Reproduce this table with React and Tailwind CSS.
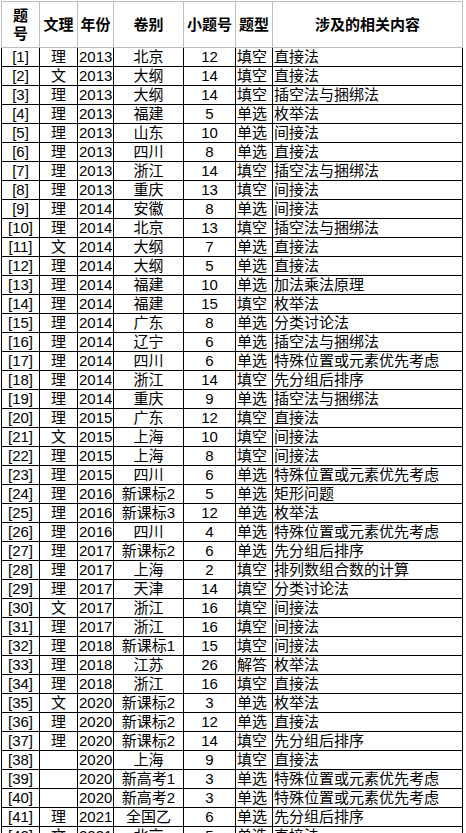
import React from 'react';

const rows = [
  ['理', '2013', '北京', '12', '填空', '直接法'],
  ['文', '2013', '大纲', '14', '填空', '直接法'],
  ['理', '2013', '大纲', '14', '填空', '插空法与捆绑法'],
  ['理', '2013', '福建', '5', '单选', '枚举法'],
  ['理', '2013', '山东', '10', '单选', '间接法'],
  ['理', '2013', '四川', '8', '单选', '直接法'],
  ['理', '2013', '浙江', '14', '填空', '插空法与捆绑法'],
  ['理', '2013', '重庆', '13', '填空', '间接法'],
  ['理', '2014', '安徽', '8', '单选', '间接法'],
  ['理', '2014', '北京', '13', '填空', '插空法与捆绑法'],
  ['文', '2014', '大纲', '7', '单选', '直接法'],
  ['理', '2014', '大纲', '5', '单选', '直接法'],
  ['理', '2014', '福建', '10', '单选', '加法乘法原理'],
  ['理', '2014', '福建', '15', '填空', '枚举法'],
  ['理', '2014', '广东', '8', '单选', '分类讨论法'],
  ['理', '2014', '辽宁', '6', '单选', '插空法与捆绑法'],
  ['理', '2014', '四川', '6', '单选', '特殊位置或元素优先考虑'],
  ['理', '2014', '浙江', '14', '填空', '先分组后排序'],
  ['理', '2014', '重庆', '9', '单选', '插空法与捆绑法'],
  ['理', '2015', '广东', '12', '填空', '直接法'],
  ['文', '2015', '上海', '10', '填空', '间接法'],
  ['理', '2015', '上海', '8', '填空', '间接法'],
  ['理', '2015', '四川', '6', '单选', '特殊位置或元素优先考虑'],
  ['理', '2016', '新课标2', '5', '单选', '矩形问题'],
  ['理', '2016', '新课标3', '12', '单选', '枚举法'],
  ['理', '2016', '四川', '4', '单选', '特殊位置或元素优先考虑'],
  ['理', '2017', '新课标2', '6', '单选', '先分组后排序'],
  ['理', '2017', '上海', '2', '填空', '排列数组合数的计算'],
  ['理', '2017', '天津', '14', '填空', '分类讨论法'],
  ['文', '2017', '浙江', '16', '填空', '间接法'],
  ['理', '2017', '浙江', '16', '填空', '间接法'],
  ['理', '2018', '新课标1', '15', '填空', '间接法'],
  ['理', '2018', '江苏', '26', '解答', '枚举法'],
  ['理', '2018', '浙江', '16', '填空', '直接法'],
  ['文', '2020', '新课标2', '3', '单选', '枚举法'],
  ['理', '2020', '新课标2', '12', '单选', '直接法'],
  ['理', '2020', '新课标2', '14', '填空', '先分组后排序'],
  ['', '2020', '上海', '9', '填空', '直接法'],
  ['', '2020', '新高考1', '3', '单选', '特殊位置或元素优先考虑'],
  ['', '2020', '新高考2', '3', '单选', '特殊位置或元素优先考虑'],
  ['理', '2021', '全国乙', '6', '单选', '先分组后排序'],
  ['文', '2021', '北京', '5', '单选', '直接法'],
];

// 열별 정렬
const align = ['justify-center', 'justify-center', 'justify-start pl-px', 'justify-center', 'justify-center', 'justify-start pl-px', 'justify-start pl-px'];

function Head({ children, first }) {
  return (
    <div className={'h-[47px] flex items-center justify-center border-t border-r border-b border-[#bdbdbd] font-bold text-[15px] leading-[18px] text-center ' + (first ? 'border-l' : '')}>
      {children}
    </div>
  );
}

export default function App() {
  return (
    <div className="bg-white min-h-[833px] pt-px pl-px text-black" style={{ fontFamily: '"Liberation Sans", "Noto Sans CJK SC", sans-serif' }}>
      <div className="grid grid-cols-[39px_38px_36px_70px_52px_37px_190px] w-[462px]">
        <Head first>
          <span className="flex flex-col">
            <span>题</span>
            <span>号</span>
          </span>
        </Head>
        <Head>文理</Head>
        <Head>年份</Head>
        <Head>卷别</Head>
        <Head>小题号</Head>
        <Head>题型</Head>
        <Head>涉及的相关内容</Head>
        {rows.map((r, i) => {
          const cells = ['[' + (i + 1) + ']', ...r];
          return cells.map((c, j) => (
            <div
              key={i + '-' + j}
              className={'h-[19px] flex items-center whitespace-nowrap overflow-hidden text-[15px] leading-[18px] border-r border-b border-black ' + align[j] + (j === 0 ? ' border-l' : '')}
            >
              {c}
            </div>
          ));
        })}
      </div>
    </div>
  );
}
